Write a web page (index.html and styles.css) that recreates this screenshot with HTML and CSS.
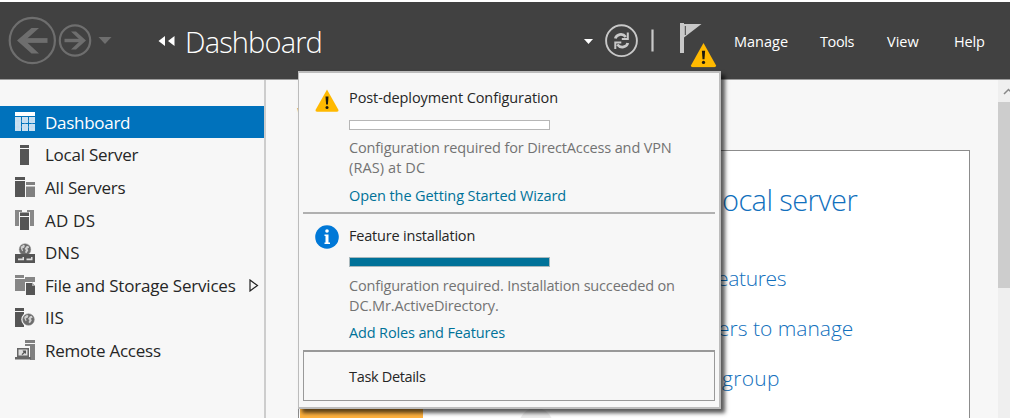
FILE: index.html
```
<!DOCTYPE html>
<html lang="en">
<head>
<meta charset="utf-8">
<title>Server Manager</title>
<link rel="stylesheet" href="styles.css">
</head>
<body>
<svg class="defs" width="0" height="0">
  <symbol id="warning" viewBox="0 0 24 23">
    <path d="M12 .5 L23.500 21 Q23.800 22.700 22 22.700 H2 Q.2 22.700 .5 21Z" fill="#ffb900"/>
    <path d="M10.500 7.500h3l-.6 8h-1.800z" fill="#1c1a10"/><circle cx="12" cy="18.400" r="1.500" fill="#1c1a10"/>
  </symbol>
  <symbol id="globe" viewBox="0 0 14 14">
    <circle cx="7" cy="7" r="6.300" fill="#6c6c6c" stroke="#999" stroke-width=".6"/>
    <path d="M2.500 4l3-2 1.500 1-1 2-2 1 1 2-1 1-1.500-3zM8.500 3.500l2-.5 1 2-2 1 1 2-2 3-1.500-1 1-2.500-1.500-1z" fill="#cfcfcf"/>
  </symbol>
</svg>
<header class="topbar">
  <svg class="nav-arrows" width="104" height="50" viewBox="0 0 104 50" fill="none" stroke="#6e6e6e">
    <circle cx="24.300" cy="24.500" r="22.600" stroke-width="2.200"/>
    <path d="M39.500 24.500H12" stroke-width="4.800"/>
    <path d="M31 12H23.500L9 24.500 23.500 37.500H31L17 24.500z" fill="#6e6e6e" stroke="none"/>
    <circle cx="67" cy="24.500" r="15.200" stroke-width="2.200"/>
    <path d="M56.500 24.500H75" stroke-width="3.400"/>
    <path d="M63 15.500h5l10 9-10 9h-5l9.500-9z" fill="#6e6e6e" stroke="none"/>
    <path d="M90.500 21h13l-6.500 7z" fill="#6e6e6e" stroke="none"/>
  </svg>
  <svg class="crumb" width="17" height="10" viewBox="0 0 17 10" fill="#fff"><path d="M7 0v10L.5 5zM16.500 0v10L10 5z"/></svg>
  <h1 class="title">Dashboard</h1>
  <svg class="tools" width="136" height="48" viewBox="0 0 136 48">
    <path d="M3 19h9l-4.500 5z" fill="#fff"/>
    <g fill="none" stroke="#c8c8c8">
      <circle cx="40.500" cy="20.700" r="15.400" stroke-width="1.900"/>
      <path d="M34.300 18.500c1-4 7-6 10.500-1.500M46.800 23c-1 4-7 6-10.500 1.500" stroke-width="2.800"/>
      <path d="M46.800 12.500v6.500h-6M34.300 29v-6.500h6" stroke-width="2"/>
      <path d="M71.500 9.500v22" stroke-width="2.200"/>
    </g>
    <path d="M99 3h4v1h17.500L103 17.500V33h-4z" fill="#c8c8c8"/>
    <path d="M104.300 6v9" stroke="#414141" stroke-width="1"/>
    <use href="#warning" x="109.500" y="22.500" width="26" height="25"/>
  </svg>
  <nav class="menu"><span class="manage">Manage</span><span class="tool">Tools</span><span class="view">View</span><span class="help">Help</span></nav>
</header>
<div class="workspace">
  <aside class="sidebar">
    <div class="row selected"><svg class="ico" viewBox="0 0 20 20"><path d="M0 0h20v4H0z" fill="#fff"/><path d="M0 5h6v14H0zM7 5h6v6H7zM14 5h6v6h-6zM7 12h6v7H7zM14 12h6v7h-6z" fill="#cbe1f1"/><path d="M0 9h20M0 15h20M3 5v14M10 5v14M17 5v14" stroke="#b8d7ed" stroke-width=".5"/></svg><span class="l1">Dashboard</span></div>
    <div class="row"><svg class="ico" viewBox="0 0 20 20"><path d="M5 0h9v3H5zM5 4h9v16H5z" fill="#555"/></svg><span class="l2">Local Server</span></div>
    <div class="row"><svg class="ico" viewBox="0 0 20 20"><path d="M0 0h10v3H0zM0 4h10v16H0z" fill="#555"/><path d="M11 5h9v3h-9zM11 9.500h9V20h-9z" fill="#808080"/></svg><span class="l3">All Servers</span></div>
    <div class="row"><svg class="ico" viewBox="0 0 20 20"><path d="M0 0h7v2H4v14H0zM12 0h7v16h-4V2h-3z" fill="#888"/><path d="M5 2.500h9V6H5zM5 7h9v13H5z" fill="#555"/></svg><span class="l4">AD DS</span></div>
    <div class="row"><svg class="ico" viewBox="0 0 20 20"><use href="#globe" x="3.500" y="0" width="13" height="13"/><path d="M0 11h20v9H0z" fill="#555"/><path d="M3 15.500h6v1.800H3zM11.500 15.500h6v1.800h-6zM7.500 14h1.500v2H7.500zM16 14h1.500v2H16z" fill="#ddd"/></svg><span class="l5">DNS</span></div>
    <div class="row"><svg class="ico" viewBox="0 0 20 20"><path d="M0 0h9v3H0zM0 4h10V2h10v5H10v9H0z" fill="#868686"/><path d="M11 8h6l3 3v9h-9z" fill="#555"/><path d="M17 7v4h3" fill="#aaa"/></svg><span class="l6">File and Storage Services</span><svg class="more" width="10" height="13" viewBox="0 0 10 13"><path d="M1 1l7.500 5.500L1 12z" fill="none" stroke="#222" stroke-width="1.200"/></svg></div>
    <div class="row"><svg class="ico" viewBox="0 0 20 20"><path d="M0 0h9v3H0zM0 4h9v15H0z" fill="#555"/><circle cx="13.500" cy="11.500" r="7.200" fill="#f7f7f7"/><use href="#globe" x="7" y="5" width="13" height="13"/></svg><span class="l7">IIS</span></div>
    <div class="row"><svg class="ico" viewBox="0 0 20 20"><path d="M10 0h10v3H10zM10 4h10v16h-5V6h-5z" fill="#808080"/><path d="M2 8h12v9H2zM0 17h16v2.500H0z" fill="#666"/><path d="M3.500 9.500h9v6h-9z" fill="#ddd"/><path d="M7.500 10.500H11v3.500l-1.200-1-2.300 2-1-.8 2-2z" fill="#555"/></svg><span class="l8">Remote Access</span></div>
  </aside>
  <main class="content">
    <div class="heading">WELCOME</div>
    <section class="welcome">
      <div class="quick-start"></div>
      <div class="steps">
        <div class="step lead"><span class="s1">ocal server</span></div>
        <div class="step"><span class="s2">eatures</span></div>
        <div class="step"><span class="s3">ers to manage</span></div>
        <div class="step last"><span class="s4">group</span></div>
      </div>
      <svg class="bubble" width="34" height="10"><circle cx="17" cy="17" r="17" fill="#ededed"/></svg>
    </section>
  </main>
  <div class="scrollbar"><svg width="12" height="21" viewBox="0 0 12 21"><path d="M6 14l4.500-4.500 4.500 4.500" fill="none" stroke="#888" stroke-width="1.500"/></svg><div class="thumb"></div></div>
</div>
<div class="flyout">
  <section class="task first">
    <svg class="state" width="24" height="23"><use href="#warning" width="24" height="23"/></svg>
    <div class="body">
      <h2><span class="p1">Post-deployment Configuration</span></h2>
      <div class="progress"></div>
      <p><span class="p2">Configuration required for DirectAccess and VPN</span><br><span class="p3">(RAS) at DC</span></p>
      <a><span class="p4">Open the Getting Started Wizard</span></a>
    </div>
  </section>
  <section class="task second">
    <svg class="state" width="24" height="24" viewBox="0 0 24 24"><circle cx="12" cy="12" r="11.800" fill="#0078d7"/><circle cx="12" cy="6" r="1.800" fill="#fff"/><path d="M9.500 9.500h4v8H15V19H9.500v-1.500h1V11h-1z" fill="#fff"/></svg>
    <div class="body">
      <h2><span class="p5">Feature installation</span></h2>
      <div class="progress done"></div>
      <p><span class="p6">Configuration required. Installation succeeded on</span><br><span class="p7">DC.Mr.ActiveDirectory.</span></p>
      <a><span class="p8">Add Roles and Features</span></a>
    </div>
  </section>
  <div class="details"><span class="p9">Task Details</span></div>
</div>
</body>
</html>
```
FILE: styles.css
```
* { box-sizing: border-box; }
body { margin: 0; width: 1010px; height: 418px; overflow: hidden; position: relative; background: #fff; font-family: "Open Sans", "Noto Sans", sans-serif; color: #262626; padding-top: 2px; }
span { white-space: nowrap; }
svg { flex: none; display: block; }
.defs { position: absolute; }
.topbar { height: 78px; background: #414141; border-bottom: 1px solid #9c9c9c; display: flex; align-items: flex-start; color: #fff; }
.nav-arrows { margin: 14px 0 0 8px; }
.crumb { margin: 34px 0 0 46px; }
.title { margin: 17px 0 0 10px; width: 136px; font-size: 29px; line-height: 46px; font-weight: 300; letter-spacing: -.85px; white-space: nowrap; }
.tools { margin: 18px 0 0 260px; }
.menu { display: flex; font-size: 14.500px; line-height: 24px; padding-top: 28px; margin-left: 17px; }
.menu span { flex: none; }
.manage { width: 86px; }
.tool { width: 67px; letter-spacing: -.4px; }
.view { width: 67px; }
.help { letter-spacing: -.2px; }
.workspace { display: flex; height: 338px; background: #f7f7f7; }
.sidebar { width: 266px; padding-top: 26px; border-right: 2px solid #cdcdcd; flex: none; }
.row { height: 32.600px; display: flex; align-items: center; padding-left: 15px; font-size: 17px; line-height: 32px; }
.row.selected { background: #0072bc; color: #fff; height: 32px; margin-bottom: .6px; }
.row span { padding-top: 1px; }
.l1 { letter-spacing: -.28px; }
.l2 { letter-spacing: -.25px; }
.l3 { letter-spacing: -.2px; }
.l4 { letter-spacing: .2px; }
.l6 { letter-spacing: -.2px; }
.l8 { letter-spacing: -.23px; }
.ico { width: 20px; height: 20px; margin-right: 10px; }
.more { margin-left: auto; margin-right: 5px; }
.content { flex: none; width: 732px; padding: 0 0 0 32px; }
.heading { height: 70px; padding-top: 22px; margin-left: -1px; font-size: 18px; line-height: 24px; color: #b39b7c; }
.welcome { width: 672px; height: 268px; background: #fff; border: 1px solid #8c8c8c; border-bottom: 0; position: relative; }
.quick-start { position: absolute; left: 1px; top: 250px; width: 123px; height: 17px; background: #ffb13d; }
.bubble { position: absolute; left: 220px; top: 257px; }
.steps { padding: 27px 0 0 423px; color: #1170bd; font-weight: 300; font-size: 21px; }
.step { height: 50px; line-height: 50px; }
.step.lead { height: 75px; line-height: 44px; font-size: 29px; }
.step.last { height: 50px; }
.s1 { letter-spacing: -.58px; }
.s2 { margin-left: -5px; letter-spacing: -.35px; }
.s3 { margin-left: -4px; }
.s4 { letter-spacing: .3px; }
.scrollbar { width: 12px; background: #efefef; overflow: hidden; }
.thumb { height: 186px; background: #cdcdcd; margin-top: 1px; }
.flyout { position: absolute; left: 298px; top: 71px; width: 423px; height: 338px; background: #f7f7f7; border: 2px solid #bcbcbc; border-left-width: 1px; box-shadow: 4px 4px 4px rgba(0,0,0,.65); padding: 0 4px; }
.task { display: flex; padding-left: 12px; }
.task.first { height: 141px; padding-top: 15px; border-bottom: 2px solid #b0b0b0; }
.task.second { height: 136px; padding-top: 12px; }
.state { margin-right: 10px; margin-top: 1px; }
.second .state { margin-top: -1px; }
.body h2 { margin: 0; font-size: 14.500px; font-weight: 400; line-height: 20px; }
.progress { width: 201px; height: 10px; border: 1px solid #b6b6b6; background: #fff; margin: 12px 0 8px; }
.progress.done { background: #007299; border-color: #a9b8bc; margin: 11px 0 9px; }
.body p { margin: 0; font-size: 14.500px; line-height: 20px; color: #737373; }
.body a { display: block; font-size: 14.500px; line-height: 20px; margin-top: 8px; color: #007299; }
.second a { margin-top: 7px; }
.p1, .p4 { letter-spacing: -.09px; }
.p2 { letter-spacing: -.13px; }
.p3 { letter-spacing: .1px; }
.p5 { letter-spacing: -.2px; }
.p6 { letter-spacing: -.17px; }
.p7, .p8 { letter-spacing: -.14px; }
.p9 { letter-spacing: -.33px; }
.details { height: 51px; border: 1px solid #999; border-top-width: 2px; font-size: 14.500px; line-height: 49px; padding-left: 45px; }
```
